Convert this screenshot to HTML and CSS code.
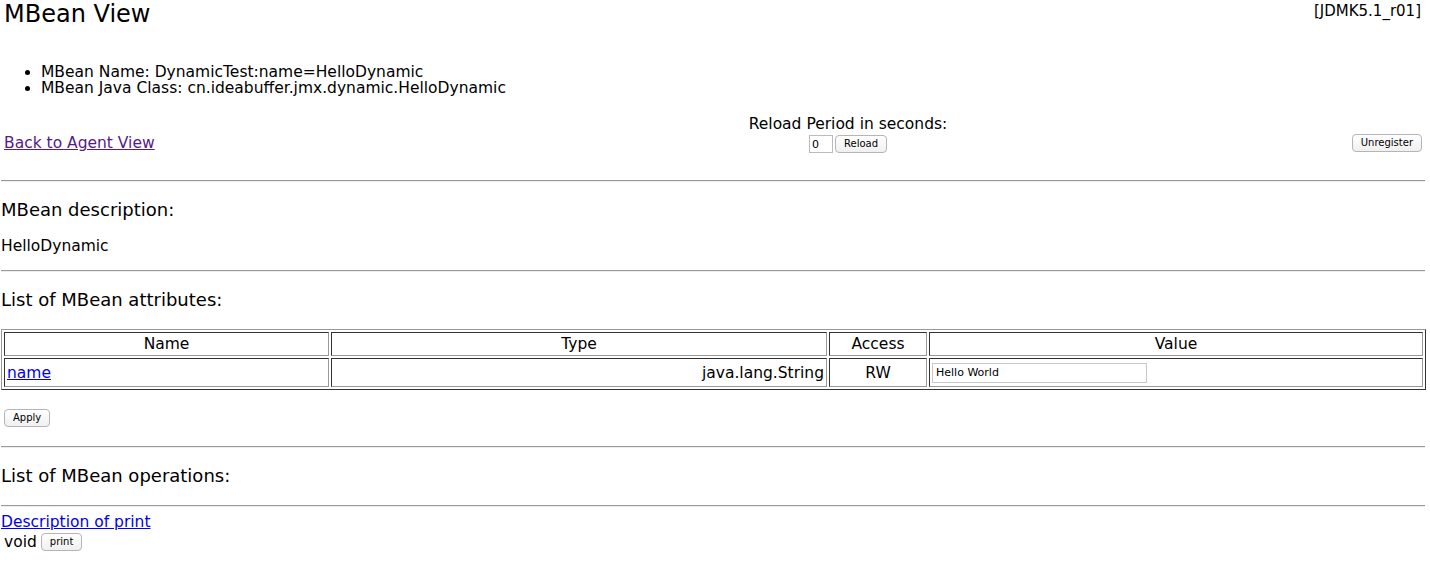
FILE: index.html
```html
<!DOCTYPE html>
<html>
<head>
<meta charset="utf-8">
<title>MBean View</title>
<link rel="stylesheet" href="styles.css">
</head>
<body>
<div class="page">
  <div class="top">
    <h1 class="title">MBean View</h1>
    <div class="version">[JDMK5.1_r01]</div>
  </div>
  <ul class="info">
    <li>MBean Name: DynamicTest:name=HelloDynamic</li>
    <li>MBean Java Class: cn.ideabuffer.jmx.dynamic.HelloDynamic</li>
  </ul>
  <div class="controls">
    <div class="ctl-left"><a class="visited" href="#">Back to Agent View</a></div>
    <div class="ctl-mid">
      <div class="reload-label">Reload Period in seconds:</div>
      <div class="reload-row"><input class="period" type="text" value="0"><button class="btn">Reload</button></div>
    </div>
    <div class="ctl-right"><button class="btn">Unregister</button></div>
  </div>
  <hr class="rule r1">
  <h3 class="sec s-desc">MBean description:</h3>
  <p class="desc">HelloDynamic</p>
  <hr class="rule r2">
  <h3 class="sec s-attr">List of MBean attributes:</h3>
  <table class="attrs">
    <tr>
      <th class="c-name">Name</th>
      <th class="c-type">Type</th>
      <th class="c-acc">Access</th>
      <th class="c-val">Value</th>
    </tr>
    <tr>
      <td class="left"><a class="link" href="#">name</a></td>
      <td class="right">java.lang.String</td>
      <td class="center">RW</td>
      <td class="left"><input class="val" type="text" value="Hello World"></td>
    </tr>
  </table>
  <div class="apply-row"><button class="btn">Apply</button></div>
  <hr class="rule r3">
  <h3 class="sec s-ops">List of MBean operations:</h3>
  <hr class="rule r4">
  <div class="op"><a class="link" href="#">Description of print</a></div>
  <div class="op-row"><span class="void">void</span><button class="btn">print</button></div>
</div>
</body>
</html>
```
FILE: styles.css
```css
html, body {
  margin: 0;
  padding: 0;
  background: #fff;
}
body {
  font-family: "DejaVu Sans", "Liberation Sans", sans-serif;
  color: #000;
  font-size: 15.5px;
}
.page {
  padding: 0 5px 0 1px;
}
.top {
  display: flex;
  justify-content: space-between;
  align-items: flex-start;
  height: 40px;
}
.title {
  margin: 0 0 0 3px;
  font-size: 24px;
  font-weight: normal;
  line-height: 28px;
}
.version {
  font-size: 15px;
  line-height: 20px;
  margin-top: 1px;
  margin-right: 4px;
}
.info {
  margin: 24px 0 0 0;
  padding-left: 40px;
  line-height: 16px;
}
.controls {
  display: flex;
  align-items: flex-end;
  margin-top: 22px;
  height: 38px;
}
.ctl-left {
  flex: 0 0 600px;
  padding-left: 3px;
  padding-bottom: 4px;
  line-height: 18px;
  box-sizing: border-box;
}
.ctl-mid {
  flex: 0 0 494px;
  text-align: center;
}
.ctl-right {
  flex: 1;
  text-align: right;
  padding-bottom: 4px;
}
.reload-label {
  line-height: 18px;
}
.reload-row {
  display: flex;
  justify-content: center;
  gap: 2px;
  margin-top: 2px;
  padding-bottom: 3px;
}
a.visited {
  color: #551a8b;
}
a.link {
  color: #0000ee;
}
.btn {
  font-family: "DejaVu Sans", "Liberation Sans", sans-serif;
  font-size: 10px;
  height: 18px;
  padding: 0 8px;
  border: 1px solid #b5b5b5;
  border-radius: 4px;
  background: linear-gradient(#ffffff, #f0f0f0);
  color: #000;
  line-height: 16px;
}
.period {
  width: 18px;
  height: 16px;
  padding: 0 2px;
  border: 1px solid #bbb;
  font-family: "DejaVu Sans", sans-serif;
  font-size: 11px;
}
.ctl-right .btn {
  margin-right: 3px;
}
.rule {
  border: 0;
  border-top: 1px solid #9a9a9a;
  border-bottom: 1px solid #eee;
  margin: 0;
  height: 0;
}
.r1 { margin-top: 24px; }
.sec {
  font-size: 18px;
  font-weight: normal;
  margin: 0;
  line-height: 22px;
}
.s-desc { margin-top: 17px; }
.desc {
  margin: 16px 0 0 0;
  line-height: 18px;
}
.r2 { margin-top: 15px; }
.s-attr { margin-top: 17px; }
.attrs {
  margin: 18px 0 0 0;
  width: 1425px;
  border: 1px solid;
  border-color: #999 #333 #333 #999;
  border-spacing: 2px;
  font-size: 15.5px;
}
.attrs th, .attrs td {
  border: 1px solid;
  border-color: #333 #999 #999 #333;
  padding: 1px 2px;
}
.attrs th {
  font-weight: normal;
  height: 20px;
}
.attrs td {
  height: 25px;
}
.c-name { width: 319px; }
.c-type { width: 490px; }
.c-acc { width: 92px; }
.left { text-align: left; }
.right { text-align: right; }
.center { text-align: center; }
.val {
  width: 207px;
  height: 18px;
  padding: 0 3px;
  border: 1px solid #c8c8c8;
  font-family: "DejaVu Sans", sans-serif;
  font-size: 11px;
  margin-left: 0;
}
.apply-row {
  margin-top: 17px;
  padding-left: 3px;
  height: 18px;
}
.r3 { margin-top: 21px; }
.s-ops { margin-top: 17px; }
.r4 { margin-top: 18px; }
.op {
  margin-top: 6px;
  line-height: 18px;
}
.op-row {
  display: flex;
  align-items: center;
  gap: 4px;
  padding-left: 3px;
  margin-top: 1px;
}
.void {
  line-height: 20px;
}
```
